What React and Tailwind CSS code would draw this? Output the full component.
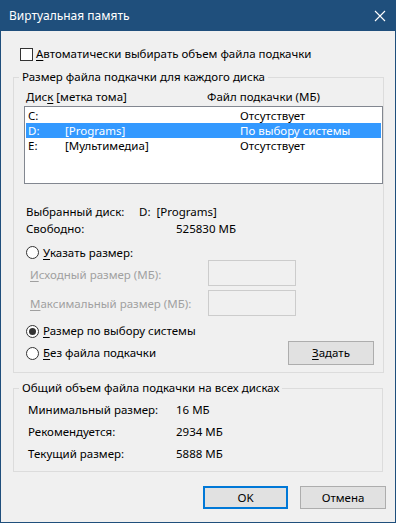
import React from 'react';

const font = { fontFamily: '"Noto Sans", "Open Sans", sans-serif' };

const Mn = ({ children }) => <span className="underline underline-offset-[2px]">{children}</span>;

const Radio = ({ checked, children }) => (
    <div className="flex items-center h-[16px]">
        <span className="w-[13px] h-[13px] rounded-full border border-[#333] bg-white flex items-center justify-center">
            {checked && <span className="w-[7px] h-[7px] rounded-full bg-[#333]"></span>}
        </span>
        <span className="ml-[4px]">{children}</span>
    </div>
);

const Group = ({ title, className, children }) => (
    <fieldset className={`border border-[#dcdcdc] ml-[12px] w-[370px] ${className}`}>
        <legend className="ml-[5px] px-[3px] h-[16px] leading-[16px]">{title}</legend>
        {children}
    </fieldset>
);

export default function App() {
    const disks = [
        { d: 'C:', label: '', state: 'Отсутствует' },
        { d: 'D:', label: '[Programs]', state: 'По выбору системы', sel: true },
        { d: 'E:', label: '[Мультимедиа]', state: 'Отсутствует' },
    ];

    return (
        <div style={font} className="w-[396px] h-[523px] border border-[#1f4f7c] border-t-0 bg-[#f0f0f0] text-[11.5px] leading-[16px] text-black flex flex-col">
            {/* title bar */}
            <div className="h-[31px] bg-[#1f4f7c] flex items-center justify-between text-white text-[12px] pl-[8px] pr-[8px]">
                <span>Виртуальная память</span>
                <svg width="12" height="12" viewBox="0 0 12 12" className="mr-[1px]">
                    <path d="M1 1 L11 11 M11 1 L1 11" stroke="#fff" strokeWidth="1.1" />
                </svg>
            </div>

            <div className="flex items-center h-[14px] mt-[16px] pl-[19px]">
                <span className="w-[13px] h-[13px] border border-[#333] bg-white"></span>
                <span className="ml-[3px]"><Mn>А</Mn>втоматически выбирать объем файла подкачки</span>
            </div>

            <Group title="Размер файла подкачки для каждого диска" className="mt-[8px] pb-[7px]">
                <div className="flex items-center h-[16px] mt-[4px] pl-[12px]">
                    <span className="w-[181px]">Дис<Mn>к</Mn> [метка тома]</span>
                    <span>Файл подкачки (МБ)</span>
                </div>
                <div className="ml-[10px] w-[359px] h-[78px] mt-[1px] border border-[#828790] bg-white pt-[1px]">
                    {disks.map((r) => (
                        <div key={r.d} className={`flex items-center h-[15px] leading-[15px] mx-[1px] pl-[2px] ${r.sel ? 'bg-[#3399ff] text-white' : ''}`}>
                            <span className="w-[37px]">{r.d}</span>
                            <span className="w-[175px]">{r.label}</span>
                            <span>{r.state}</span>
                        </div>
                    ))}
                </div>

                <div className="flex items-center h-[16px] mt-[20px] pl-[12px]">
                    <span className="w-[113px]">Выбранный диск:</span>
                    <span>D:&nbsp;&nbsp;[Programs]</span>
                </div>
                <div className="flex items-center h-[16px] mt-[1px] pl-[12px]">
                    <span className="w-[150px]">Свободно:</span>
                    <span>525830 МБ</span>
                </div>

                <div className="mt-[8px] pl-[12px] h-[15px] flex items-center">
                    <Radio><Mn>У</Mn>казать размер:</Radio>
                </div>
                <div className="flex items-center h-[26px] pl-[16px] text-[#a0a0a0]">
                    <span className="w-[178px] mt-[3px]"><Mn>И</Mn>сходный размер (МБ):</span>
                    <span className="w-[88px] h-[26px] border border-[#cccccc]"></span>
                </div>
                <div className="flex items-center h-[26px] mt-[4px] pl-[16px] text-[#a0a0a0]">
                    <span className="w-[178px] mt-[1px]"><Mn>М</Mn>аксимальный размер (МБ):</span>
                    <span className="w-[88px] h-[26px] border border-[#cccccc]"></span>
                </div>

                <div className="mt-[7px] pl-[12px]">
                    <Radio checked><Mn>Р</Mn>азмер по выбору системы</Radio>
                </div>
                <div className="flex items-center justify-between h-[24px] mt-[2px] pl-[12px] pr-[9px]">
                    <Radio><Mn>Б</Mn>ез файла подкачки</Radio>
                    <button className="w-[86px] h-[24px] bg-[#e1e1e1] border border-[#adadad]">
                        <Mn>З</Mn>адать
                    </button>
                </div>
            </Group>

            <Group title="Общий объем файла подкачки на всех дисках" className="mt-[7px] pb-[9px]">
                {[
                    ['Минимальный размер:', '16 МБ'],
                    ['Рекомендуется:', '2934 МБ'],
                    ['Текущий размер:', '5888 МБ'],
                ].map(([k, v]) => (
                    <div key={k} className="flex items-center h-[16px] mt-[6px] pl-[14px]">
                        <span className="w-[148px]">{k}</span>
                        <span>{v}</span>
                    </div>
                ))}
            </Group>

            <div className="flex justify-end gap-[12px] mt-[14px] pr-[9px]">
                <button className="w-[85px] h-[23px] bg-[#e1e1e1] border-2 border-[#0078d7]">OK</button>
                <button className="w-[86px] h-[23px] bg-[#e1e1e1] border border-[#adadad]">Отмена</button>
            </div>
        </div>
    );
}
